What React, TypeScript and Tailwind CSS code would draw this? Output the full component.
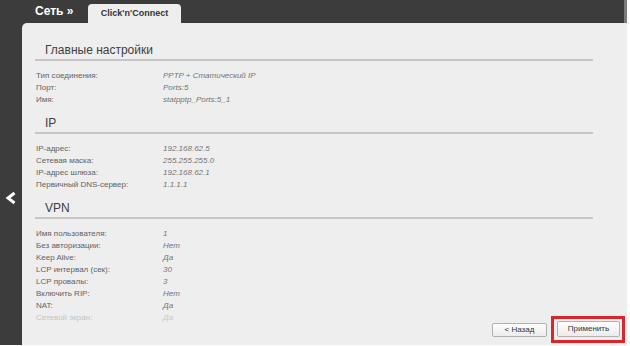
import React from "react";

const F = { fontFamily: '"Liberation Sans", Arial, sans-serif' };

type Row = [string, string, boolean?];

const Section = ({ title, rows }: { title: string; rows: Row[] }) => (
  <div className="flex flex-col">
    <div className="mr-[34px] ml-[13px] border-b-2 border-[#c6c6c6] pb-[1px] pl-[10px] text-[12px] leading-[16px] text-[#404040]">
      {title}
    </div>
    <div className="mt-[9px] mb-[9px] flex flex-col pl-[14px]">
      {rows.map(([l, v, faded]) => (
        <div key={l} className="flex h-[12px] items-center text-[8px] leading-[12px]">
          <span className={`w-[127px] ${faded ? "text-[#c4c4c4]" : "text-[#626262]"}`}>{l}</span>
          <span className={`italic ${faded ? "text-[#c8c8c8]" : "text-[#747474]"}`}>{v}</span>
        </div>
      ))}
    </div>
  </div>
);

export default function App() {
  return (
    <div className="flex h-[346px] w-[630px] bg-white" style={F}>
      <div className="flex h-[345px] w-[627px] flex-col bg-[#3c3c3c]">
        <div className="flex h-[23px] items-end">
          <div className="ml-[35px] flex h-[23px] w-[53px] items-center pb-[1px] text-[12px] font-bold text-white">
            Сеть »
          </div>
          <div className="flex h-[19px] w-[93px] items-center justify-center rounded-t-[4px] bg-[#eeeeee] text-[9px] font-bold text-[#333]">
            Click'n'Connect
          </div>
          <div className="flex-1" />
          <div className="h-[23px] w-[3px] bg-[#7a7a7a]" />
        </div>
        <div className="flex flex-1">
          <div className="flex w-[22px] flex-col items-center pt-[168px]">
            <svg width="12" height="14" viewBox="0 0 12 14">
              <polyline points="9.5,2 3,7 9.5,12" fill="none" stroke="#ffffff" strokeWidth="3" strokeLinejoin="miter" />
            </svg>
          </div>
          <div className="relative flex flex-1 flex-col overflow-hidden rounded-tl-[5px] bg-[#eeeeee] pt-[19px]">
            <Section
              title="Главные настройки"
              rows={[
                ["Тип соединения:", "PPTP + Статический IP"],
                ["Порт:", "Ports:5"],
                ["Имя:", "statpptp_Ports:5_1"],
              ]}
            />
            <Section
              title="IP"
              rows={[
                ["IP-адрес:", "192.168.62.5"],
                ["Сетевая маска:", "255.255.255.0"],
                ["IP-адрес шлюза:", "192.168.62.1"],
                ["Первичный DNS-сервер:", "1.1.1.1"],
              ]}
            />
            <Section
              title="VPN"
              rows={[
                ["Имя пользователя:", "1"],
                ["Без авторизации:", "Нет"],
                ["Keep Alive:", "Да"],
                ["LCP интервал (сек):", "30"],
                ["LCP провалы:", "3"],
                ["Включить RIP:", "Нет"],
                ["NAT:", "Да"],
                ["Сетевой экран:", "Да", true],
              ]}
            />
            <div className="absolute bottom-[2px] right-[2px] flex items-end gap-[4px]">
              <button className="mb-[6px] flex h-[14px] w-[55px] items-center justify-center rounded-[2px] border border-[#b0b0b0] bg-gradient-to-b from-white to-[#ececec] text-[8px] text-[#333]">
                &lt; Назад
              </button>
              <div className="border-[3px] border-[#d9252c] pb-[3px] pl-[3px] pr-[2px] pt-[2px]">
                <button className="flex h-[16px] w-[63px] items-center justify-center rounded-[2px] border border-[#b0b0b0] bg-gradient-to-b from-white to-[#ececec] text-[8px] text-[#333]">
                  Применить
                </button>
              </div>
            </div>
          </div>
        </div>
      </div>
    </div>
  );
}
